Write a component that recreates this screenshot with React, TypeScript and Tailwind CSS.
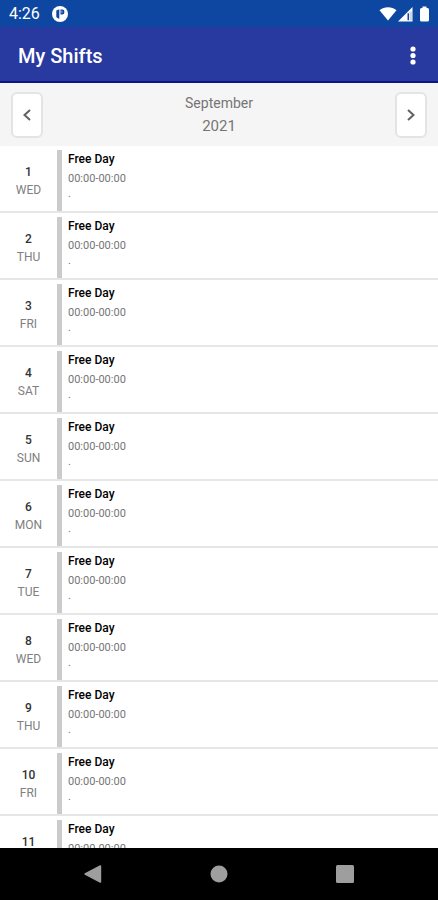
type Shift = {
  day: number;
  weekday: string;
  title: string;
  hours: string;
  note: string;
};

const WEEKDAYS = ["WED", "THU", "FRI", "SAT", "SUN", "MON", "TUE"];

const shifts: Shift[] = Array.from({ length: 11 }, (_, i) => ({
  day: i + 1,
  weekday: WEEKDAYS[i % 7],
  title: "Free Day",
  hours: "00:00-00:00",
  note: ".",
}));

function StatusBar() {
  return (
    <div className="flex h-[27px] shrink-0 items-center bg-[#0d47a1] pt-px pr-2 pl-[9px] text-white">
      <span className="text-base leading-none">4:26</span>
      <svg className="ml-3 size-4" viewBox="0 0 16 16" aria-hidden="true">
        <circle cx="8" cy="8" r="8" fill="#fff" />
        <path d="M4.300 4.500 7.300 3.200v9.600L5.800 12.300 4.300 11z" fill="#0d47a1" />
        <path d="M8.500 3.400h1.700a2.200 2.200 0 0 1 2.200 2.300v.6a2.200 2.200 0 0 1-2.200 2.200H8.500z" fill="#0d47a1" />
        <path d="M9.600 4.800h.6v2h-.6z" fill="#fff" />
      </svg>
      <svg className="ml-auto h-4 w-[51px]" viewBox="0 0 51 16" aria-hidden="true">
        <path d="M.5 4.200C5 .2 13 .2 17.500 4.200L9 14.500z" fill="#fff" />
        <path d="M33.500 1v14.500H19z" fill="#fff" />
        <path d="M28.500 7.200h1.500v7h-1.500z" fill="#0d47a1" />
        <path d="M30.500 5.500h2.500v9h-2.500z" fill="#cbd6ea" />
        <path d="M43.500 .5h4v1.500h1a1.500 1.500 0 0 1 1.500 1.500v10.500a1.500 1.500 0 0 1-1.500 1.500h-6a1.500 1.500 0 0 1-1.500-1.500V3.500a1.500 1.500 0 0 1 1.500-1.500h1z" fill="#fff" />
      </svg>
    </div>
  );
}

function AppBar() {
  return (
    <header className="flex h-14 shrink-0 items-center justify-between border-b-2 border-[#0c1684] bg-[#283a9f] pt-[3px] pr-[15px] pl-[18px] text-white">
      <h1 className="text-xl leading-none font-medium">My Shifts</h1>
      <button type="button" aria-label="More options" className="flex w-5 justify-center">
        <svg className="h-5 w-[6px]" viewBox="0 0 6 20" fill="#fff" aria-hidden="true">
          <circle cx="3" cy="3" r="2.600" />
          <circle cx="3" cy="9.500" r="2.600" />
          <circle cx="3" cy="16" r="2.600" />
        </svg>
      </button>
    </header>
  );
}

function ArrowButton({ label, path }: { label: string; path: string }) {
  return (
    <button
      type="button"
      aria-label={label}
      className="flex h-[46px] w-8 items-center justify-center rounded-md border-2 border-[#e4e4e4] bg-white"
    >
      <svg className="h-3 w-2" viewBox="0 0 8 12" fill="none" stroke="#616161" strokeWidth="2" aria-hidden="true">
        <path d={path} />
      </svg>
    </button>
  );
}

function MonthBar() {
  return (
    <div className="flex h-[63px] shrink-0 items-center justify-between bg-[#f5f5f5] px-[11px]">
      <ArrowButton label="Previous month" path="M7 1 1.500 6 7 11" />
      <div className="text-center text-[#757575]">
        <p className="text-sm leading-[23px]">September</p>
        <p className="text-[15px] leading-[23px]">2021</p>
      </div>
      <ArrowButton label="Next month" path="M1 1 6.500 6 1 11" />
    </div>
  );
}

function ShiftRow({ shift }: { shift: Shift }) {
  return (
    <li className="flex h-[67px] border-b-2 border-[#e6e6e6] pt-1">
      <div className="flex w-[57px] shrink-0 flex-col items-center pt-[13px] text-xs leading-[18px]">
        <span className="font-medium text-[#333]">{shift.day}</span>
        <span className="text-[#808080]">{shift.weekday}</span>
      </div>
      <div className="flex-1 border-l-5 border-[#cbcbcb] pl-[6px]">
        <p className="text-xs leading-[19px] font-medium text-black">{shift.title}</p>
        <p className="text-[11px] leading-[19px] text-[#757575]">{shift.hours}</p>
        <p className="text-[11px] leading-3 text-[#757575]">{shift.note}</p>
      </div>
    </li>
  );
}

function NavBar() {
  return (
    <nav className="flex h-[52px] shrink-0 items-center justify-center gap-[108px] bg-black">
      <button type="button" aria-label="Back">
        <svg className="size-[18px]" viewBox="0 0 18 18" fill="#9e9e9e" aria-hidden="true">
          <path d="M16 .3c.6-.3 1.200.1 1.200.7v16c0 .6-.6 1-1.200.7L.8 9.700c-.6-.3-.6-1.100 0-1.400z" />
        </svg>
      </button>
      <button type="button" aria-label="Home">
        <svg className="size-[18px]" viewBox="0 0 18 18" fill="#9e9e9e" aria-hidden="true">
          <circle cx="9" cy="9" r="8.500" />
        </svg>
      </button>
      <button type="button" aria-label="Recent apps">
        <svg className="size-[18px]" viewBox="0 0 18 18" fill="#9e9e9e" aria-hidden="true">
          <rect width="18" height="18" rx="1.500" />
        </svg>
      </button>
    </nav>
  );
}

export default function App() {
  return (
    <div className="flex h-screen flex-col bg-white font-['Roboto',sans-serif]">
      <StatusBar />
      <AppBar />
      <MonthBar />
      <ul className="min-h-0 flex-1 overflow-hidden">
        {shifts.map((shift) => (
          <ShiftRow key={shift.day} shift={shift} />
        ))}
      </ul>
      <NavBar />
    </div>
  );
}
